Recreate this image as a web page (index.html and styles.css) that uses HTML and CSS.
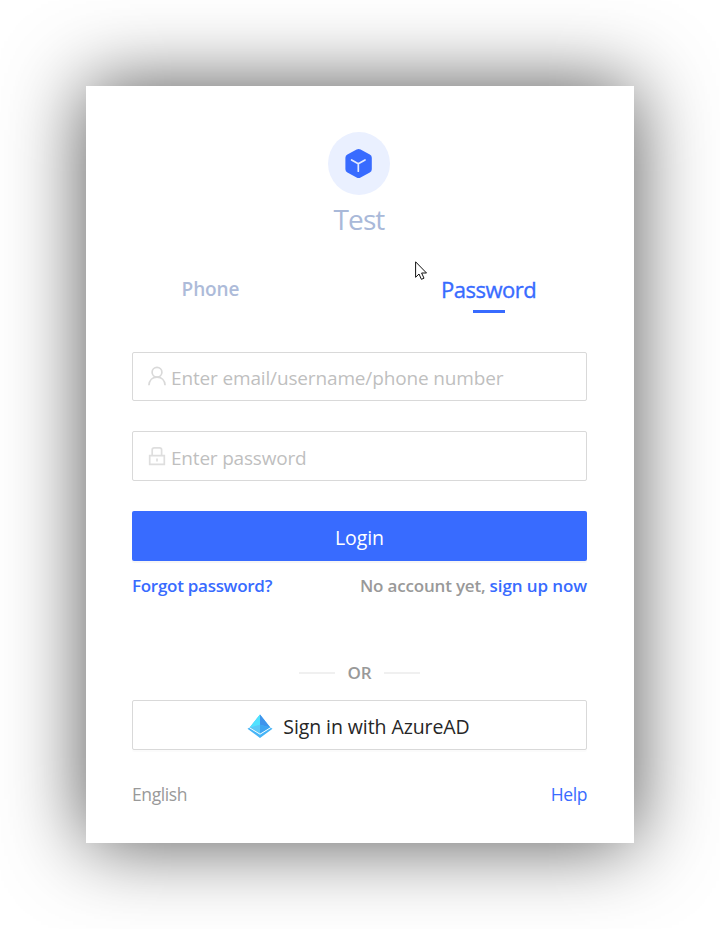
FILE: index.html
```html
<!DOCTYPE html>
<html lang="en">
<head>
<meta charset="utf-8">
<title>Test</title>
<link rel="stylesheet" href="styles.css">
</head>
<body>
<main class="card">
  <header class="brand">
    <svg class="logo" width="62" height="63" viewBox="0 0 62 63">
      <ellipse cx="31" cy="31.5" rx="31" ry="31.5" fill="#eaf0ff"/>
      <path d="M28.6 17.6Q30.6 16.5 32.600 17.600L41.800 22.500Q43.800 23.600 43.800 25.800V37.200Q43.800 39.400 41.800 40.500L32.600 45.500Q30.600 46.600 28.600 45.500L19.400 40.500Q17.400 39.400 17.400 37.200V25.800Q17.400 23.600 19.400 22.500Z" fill="#386bff"/>
      <path d="M23.600 28L30.300 31.800L37 28M30.300 31.800V39.200" fill="none" stroke="#e3eaff" stroke-width="1.700" stroke-linecap="round"/>
    </svg>
    <h1 class="title"><span>Test</span></h1>
  </header>
  <nav class="tabs">
    <a class="tab phone"><span>Phone</span></a>
    <a class="tab active"><span>Password</span></a>
  </nav>
  <form class="form">
    <label class="field">
      <svg width="20" height="22" viewBox="0 0 20 22" fill="none" stroke="#d9d9d9" stroke-width="1.700"><circle cx="10" cy="7.200" r="4.900"/><path d="M1.900 20.300C2.200 15.200 5.500 12.100 10 12.100S17.800 15.200 18.100 20.300"/></svg>
      <span class="placeholder email">Enter email/username/phone number</span>
    </label>
    <label class="field">
      <svg width="20" height="22" viewBox="0 0 20 22" fill="none" stroke="#dedede" stroke-width="1.700"><path d="M5.200 10V4.900Q5.200 2.900 7.200 2.900H12.600Q14.600 2.900 14.600 4.900V10M2.700 10.700H17.300V19.300H2.700Z"/><path d="M10 13.500V16.500"/></svg>
      <span class="placeholder pass">Enter password</span>
    </label>
    <button class="login" type="button"><span>Login</span></button>
    <div class="links"><a class="forgot">Forgot password?</a><span class="signup"><span class="none">No account yet,</span> <a class="now">sign up now</a></span></div>
  </form>
  <div class="divider"><i></i><span>OR</span><i></i></div>
  <button class="azure" type="button">
    <svg width="26" height="24" viewBox="0 0 26 24">
      <path d="M13 .5L23.300 13.400L13 20L2.700 13.400Z" fill="#42bdf7"/>
      <path d="M13 .5V20L2.700 13.400Z" fill="#50e2ff"/>
      <path d="M13 .5L23.300 13.400L13 10.700Z" fill="#3f94ec"/>
      <path d="M13 10.700L23.300 13.400L13 20Z" fill="#3fa6f2"/>
      <path d="M2.700 13.400L13 10.700V20Z" fill="#5ac8f7"/>
      <path d="M.5 14.800L2.500 13.500L13 20.200L23.500 13.500L25.500 14.800L13 23.900Z" fill="#46b4f7"/>
      <path d="M2.400 13.700L13 20.200L23.600 13.700" fill="none" stroke="#f2fbff" stroke-width="1"/>
    </svg>
    <span>Sign in with AzureAD</span>
  </button>
  <footer class="foot"><span class="lang">English</span><a class="help">Help</a></footer>
  <svg class="cursor" width="13" height="20" viewBox="0 0 13 20"><path d="M.6 .8V16.300L4 13L6.400 18.300L9 17.200L6.600 12H11.500Z" fill="#fff" stroke="#111" stroke-width="1"/></svg>
</main>
</body>
</html>
```

FILE: styles.css
```css
* { box-sizing: border-box; }
body { margin: 0; min-height: 929px; background: #fff; font-family: "Open Sans", "Noto Sans", sans-serif; overflow: hidden; }
.card { position: relative; width: 548px; height: 757px; margin: 86px; padding: 46px 47px 0 46px; background: #fff; box-shadow: 0 0 75px rgba(0, 0, 0, .68); white-space: nowrap; }
.brand { height: 126px; display: flex; flex-direction: column; align-items: center; padding-right: 1px; }
.logo { display: block; margin-right: 1px; }
.title { margin: 4px 0 0; height: 40px; line-height: 40px; font-size: 28px; font-weight: 400; letter-spacing: -.9px; color: #a9b9d9; }
.tabs { display: flex; height: 94px; padding-top: 12px; }
.tab { height: 44px; line-height: 38px; font-weight: 600; color: #adbbd9; font-size: 18.500px; }
.phone { width: 157px; text-align: center; line-height: 39px; font-size: 19px; letter-spacing: -.1px; }
.active { width: 95px; margin-left: 152px; color: #386bff; font-size: 22px; font-weight: 500; letter-spacing: -.5px; -webkit-text-stroke: .35px #386bff; }
.active::after { content: ""; display: block; width: 32px; height: 3px; margin: 2px auto 0; background: #386bff; }
.field { display: flex; align-items: center; height: 49px; margin-bottom: 30px; padding: 2px 14px 0 14px; border: 1px solid #d9d9d9; border-radius: 2px; }
.field + .field { height: 50px; }
.field svg { margin: -3px 4px 0 0; }
.placeholder { font-size: 19px; letter-spacing: -.15px; color: #bfbfbf; }
.pass { padding-top: 2px; letter-spacing: -.2px; }
.login, .azure { display: flex; align-items: center; justify-content: center; width: 100%; height: 50px; padding: 2px 0 0; border-radius: 2px; font: 400 19.500px "Open Sans", sans-serif; letter-spacing: -.08px; }
.login { border: 0; background: #386bff; color: #fff; box-shadow: 0 2px 0 rgba(0, 0, 0, .035); }
.links { display: flex; justify-content: space-between; height: 50px; line-height: 50px; font-size: 17px; font-weight: 600; letter-spacing: -.28px; color: #999; }
.none { letter-spacing: -.18px; }
.now { letter-spacing: -.1px; }
.forgot, .now, .help { color: #386bff; }
.divider { display: flex; align-items: center; justify-content: center; gap: 12.500px; height: 28px; margin-top: 47px; font-size: 17px; font-weight: 600; letter-spacing: -.1px; color: #999; }
.divider i { width: 36px; height: 2px; background: #f0f0f0; margin-top: 2px; }
.azure { margin-top: 14px; padding-right: 2px; background: #fff; border: 1px solid #d9d9d9; color: #262626; box-shadow: 0 2px 0 rgba(0, 0, 0, .016); }
.azure svg { margin: 0 10px 0 0; }
.foot { display: flex; justify-content: space-between; margin-top: 29px; height: 30px; line-height: 30px; font-size: 17.500px; letter-spacing: -.4px; color: #999; }
.cursor { position: absolute; left: 329px; top: 175px; }
```
